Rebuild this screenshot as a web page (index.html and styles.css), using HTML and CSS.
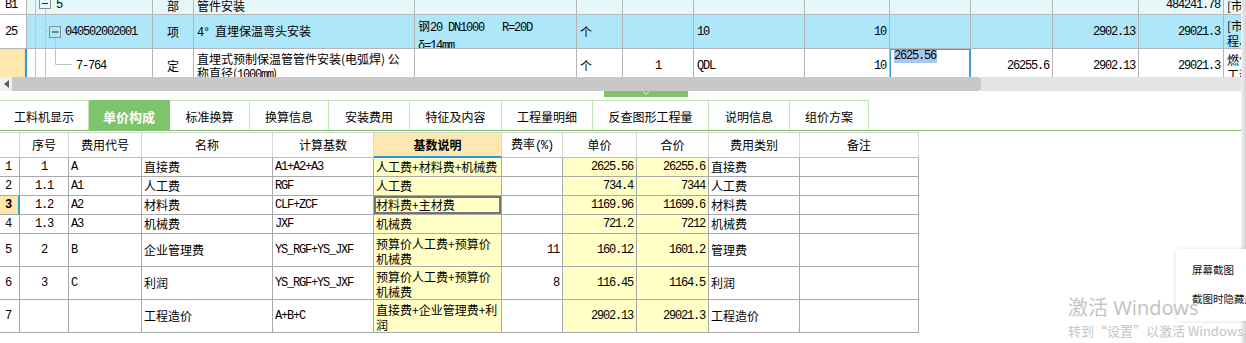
FILE: index.html
```html
<!DOCTYPE html>
<html lang="zh-CN">
<head>
<meta charset="utf-8">
<title>单价构成</title>
<link rel="stylesheet" href="styles.css">
</head>
<body>
<div class="app">
  <section class="grid-top">
    <div class="row r1">
      <div class="gc rn n">B1</div>
      <div class="gc code">
        <svg class="tree" width="29" height="14" viewBox="0 0 29 14">
          <path d="M8.5 0V14M18.5 9V14" stroke="#c4c4c4" fill="none"/>
          <rect x="12.5" y="-2.5" width="11" height="11" fill="none" stroke="#8c8c8c"/>
          <path d="M15 3.5H21" stroke="#222"/>
        </svg>
        <span class="n">5</span>
      </div>
      <div class="gc ctr">部</div>
      <div class="gc">管件安装</div>
      <div class="gc"></div><div class="gc"></div><div class="gc"></div><div class="gc"></div>
      <div class="gc"></div><div class="gc"></div><div class="gc"></div><div class="gc"></div>
      <div class="gc rt n">484241.78</div>
      <div class="gc">[市政</div>
    </div>
    <div class="row r2">
      <div class="gc rn n">25</div>
      <div class="gc code">
        <svg class="tree" width="38" height="33" viewBox="0 0 38 33">
          <path d="M8.5 0V33M18.5 0V33M18.5 16.5H22M28.5 23V33" stroke="#c4c4c4" fill="none"/>
          <rect x="22.5" y="11.5" width="11" height="11" fill="none" stroke="#8c8c8c"/>
          <path d="M25 17H31.5" stroke="#222"/>
        </svg>
        <span class="n">040502002001</span>
      </div>
      <div class="gc ctr">项</div>
      <div class="gc"><span><span class="n">4° </span>直埋保温弯头安装</span></div>
      <div class="gc top feat"><div>钢<span class="n">20 DN1000   R=20D</span><br><span class="n">δ=14mm</span></div></div>
      <div class="gc">个</div>
      <div class="gc"></div>
      <div class="gc n">10</div>
      <div class="gc rt n">10</div>
      <div class="gc"></div>
      <div class="gc"></div>
      <div class="gc rt n">2902.13</div>
      <div class="gc rt n">29021.3</div>
      <div class="gc top"><div>[市政<br>程、</div></div>
    </div>
    <div class="row r3">
      <div class="gc rn"></div>
      <div class="gc code">
        <svg class="tree" width="49" height="34" viewBox="0 0 49 34">
          <path d="M8.5 0V34M18.5 0V34M28.5 0V15.5H45" stroke="#c4c4c4" fill="none"/>
        </svg>
        <span class="n">7-764</span>
      </div>
      <div class="gc ctr">定</div>
      <div class="gc top wrap"><div>直埋式预制保温管管件安装(电弧焊) 公<br>称直径(<span class="n">1000mm</span>)</div></div>
      <div class="gc"></div>
      <div class="gc">个</div>
      <div class="gc ctr n">1</div>
      <div class="gc n">QDL</div>
      <div class="gc rt n">10</div>
      <div class="gc sel"><span class="n hi">2625.56</span></div>
      <div class="gc rt n">26255.6</div>
      <div class="gc rt n">2902.13</div>
      <div class="gc rt n">29021.3</div>
      <div class="gc top"><div>燃气<br>工程</div></div>
    </div>
  </section>

  <div class="hscroll">
    <div class="sb-arrow">
      <svg width="5" height="8" viewBox="0 0 5 8"><path d="M5 0V8L0 4Z" fill="#5a5a5a"/></svg>
    </div>
    <div class="sb-thumb"></div>
    <div class="sb-track"></div>
  </div>

  <div class="split">
    <div class="handle">
      <svg width="8" height="4" viewBox="0 0 8 4"><path d="M1 0.5L4 3.2L7 0.5" stroke="#e8f5e2" fill="none"/></svg>
    </div>
  </div>

  <nav class="tabs">
    <div class="tab">工料机显示</div>
    <div class="tab on">单价构成</div>
    <div class="tab">标准换算</div>
    <div class="tab">换算信息</div>
    <div class="tab">安装费用</div>
    <div class="tab">特征及内容</div>
    <div class="tab">工程量明细</div>
    <div class="tab">反查图形工程量</div>
    <div class="tab">说明信息</div>
    <div class="tab">组价方案</div>
  </nav>

  <section class="fee">
    <div class="row fh">
      <div class="fc"></div>
      <div class="fc">序号</div>
      <div class="fc">费用代号</div>
      <div class="fc">名称</div>
      <div class="fc">计算基数</div>
      <div class="fc hl">基数说明</div>
      <div class="fc"><span>费率<span class="n">(%)</span></span></div>
      <div class="fc">单价</div>
      <div class="fc">合价</div>
      <div class="fc">费用类别</div>
      <div class="fc">备注</div>
    </div>
    <div class="row fb">
      <div class="fc rn n">1</div>
      <div class="fc ctr n">1</div>
      <div class="fc n">A</div>
      <div class="fc">直接费</div>
      <div class="fc n">A1+A2+A3</div>
      <div class="fc y">人工费+材料费+机械费</div>
      <div class="fc"></div>
      <div class="fc y rt n">2625.56</div>
      <div class="fc y rt n">26255.6</div>
      <div class="fc">直接费</div>
      <div class="fc"></div>
    </div>
    <div class="row fb">
      <div class="fc rn n">2</div>
      <div class="fc ctr n">1.1</div>
      <div class="fc n">A1</div>
      <div class="fc">人工费</div>
      <div class="fc n">RGF</div>
      <div class="fc y">人工费</div>
      <div class="fc"></div>
      <div class="fc y rt n">734.4</div>
      <div class="fc y rt n">7344</div>
      <div class="fc">人工费</div>
      <div class="fc"></div>
    </div>
    <div class="row fb">
      <div class="fc rn cur">3</div>
      <div class="fc ctr n">1.2</div>
      <div class="fc n">A2</div>
      <div class="fc">材料费</div>
      <div class="fc n">CLF+ZCF</div>
      <div class="fc y focus">材料费+主材费</div>
      <div class="fc"></div>
      <div class="fc y rt n">1169.96</div>
      <div class="fc y rt n">11699.6</div>
      <div class="fc">材料费</div>
      <div class="fc"></div>
    </div>
    <div class="row fb">
      <div class="fc rn n">4</div>
      <div class="fc ctr n">1.3</div>
      <div class="fc n">A3</div>
      <div class="fc">机械费</div>
      <div class="fc n">JXF</div>
      <div class="fc y">机械费</div>
      <div class="fc"></div>
      <div class="fc y rt n">721.2</div>
      <div class="fc y rt n">7212</div>
      <div class="fc">机械费</div>
      <div class="fc"></div>
    </div>
    <div class="row fb">
      <div class="fc rn n">5</div>
      <div class="fc ctr n">2</div>
      <div class="fc n">B</div>
      <div class="fc">企业管理费</div>
      <div class="fc n">YS_RGF+YS_JXF</div>
      <div class="fc y top"><div>预算价人工费+预算价<br>机械费</div></div>
      <div class="fc rt n">11</div>
      <div class="fc y rt n">160.12</div>
      <div class="fc y rt n">1601.2</div>
      <div class="fc">管理费</div>
      <div class="fc"></div>
    </div>
    <div class="row fb">
      <div class="fc rn n">6</div>
      <div class="fc ctr n">3</div>
      <div class="fc n">C</div>
      <div class="fc">利润</div>
      <div class="fc n">YS_RGF+YS_JXF</div>
      <div class="fc y top"><div>预算价人工费+预算价<br>机械费</div></div>
      <div class="fc rt n">8</div>
      <div class="fc y rt n">116.45</div>
      <div class="fc y rt n">1164.5</div>
      <div class="fc">利润</div>
      <div class="fc"></div>
    </div>
    <div class="row fb">
      <div class="fc rn n">7</div>
      <div class="fc"></div>
      <div class="fc"></div>
      <div class="fc">工程造价</div>
      <div class="fc n">A+B+C</div>
      <div class="fc y top"><div>直接费+企业管理费+利<br>润</div></div>
      <div class="fc"></div>
      <div class="fc y rt n">2902.13</div>
      <div class="fc y rt n">29021.3</div>
      <div class="fc">工程造价</div>
      <div class="fc"></div>
    </div>
  </section>
</div>

<div class="edge"></div>
<div class="menu">
  <div class="mi">屏幕截图</div>
  <div class="mi">截图时隐藏此窗口</div>
</div>
<div class="wm">
  <div class="wm1">激活 Windows</div>
  <div class="wm2">转到<span class="q">“</span>设置<span class="q">”</span>以激活 Windows。</div>
</div>
</body>
</html>
```

FILE: styles.css
```css
* { box-sizing: border-box; margin: 0; padding: 0; }
html, body { width: 1246px; height: 343px; overflow: hidden; background: #fff; }
body {
  position: relative;
  font-family: "Noto Sans CJK SC", "Liberation Sans", sans-serif;
  font-size: 12px;
  color: #000;
}
.n {
  font-family: "Liberation Mono", "Noto Sans CJK SC", monospace;
  letter-spacing: -1.2px;
}

/* ---------- upper grid ---------- */
.grid-top {
  display: grid;
  grid-template-columns: 27px 126px 41px 221px 162px 46px 71px 111px 85px 81px 82px 86px 85px 60px;
  grid-template-rows: 15px 34px 35px;
  width: 1246px;
  height: 77px;
  overflow: hidden;
}
.row { display: contents; }
.gc {
  display: flex;
  align-items: center;
  padding: 0 3px;
  border-right: 1px solid #b6b6b6;
  border-bottom: 1px solid #b6b6b6;
  white-space: nowrap;
  overflow: hidden;
  line-height: 14px;
}
.r1 .gc { background: #e6f7fc; align-items: flex-start; line-height: 11px; }
.r2 .gc { background: #aee7f9; }
.r3 .gc { background: #fff; }
.gc.rn { background: #fff; padding-left: 5px; }
.r3 .gc.rn { background: #fde9b0; border-right: 2px solid #2c9fd8; }
.gc.code { padding-left: 0; }
.tree { flex: none; display: block; }
.ctr { justify-content: center; }
.rt { justify-content: flex-end; }
.gc.top { align-items: flex-start; padding-top: 3px; line-height: 15px; }
.gc.wrap { padding-top: 3px; line-height: 14px; }
.feat .n { white-space: pre; }
.gc.sel {
  align-items: flex-start;
  padding: 1px 0 0 4px;
  box-shadow: inset 0 0 0 1px #3aa2d8;
  border-color: #3aa2d8;
}
.hi { background: #a8c7ef; line-height: 13px; padding-right: 1px; }

/* ---------- scrollbar ---------- */
.hscroll { display: flex; height: 14px; }
.sb-arrow {
  width: 12px;
  background: #f0f0f0;
  display: flex;
  align-items: center;
  justify-content: center;
}
.sb-thumb { width: 969px; background: #c8c8c8; border-radius: 0 3px 3px 0; }
.sb-track { flex: 1; background: #e4e4e4; }

/* ---------- splitter ---------- */
.split { height: 9px; }
.handle {
  margin-left: 604px;
  width: 84px;
  height: 6px;
  background: #80c26c;
  display: flex;
  justify-content: center;
}

/* ---------- tabs ---------- */
.tabs {
  display: flex;
  height: 31px;
  border-bottom: 1px solid #7ec06b;
}
.tab {
  display: flex;
  align-items: center;
  justify-content: center;
  padding-top: 2px;
  border-top: 1px solid #c3e5b5;
  border-right: 1px solid #c3e5b5;
  white-space: nowrap;
}
.tab:nth-child(1) { width: 89px; }
.tab:nth-child(2) { width: 81px; }
.tab:nth-child(3) { width: 80px; }
.tab:nth-child(4) { width: 79px; }
.tab:nth-child(5) { width: 81px; }
.tab:nth-child(6) { width: 92px; }
.tab:nth-child(7) { width: 91px; }
.tab:nth-child(8) { width: 116px; }
.tab:nth-child(9) { width: 81px; }
.tab:nth-child(10) { width: 79px; }
.tab.on {
  background: #7ec46c;
  border-color: #7ec46c;
  color: #fff;
  font-weight: bold;
  font-size: 13px;
}

/* ---------- fee table ---------- */
.fee {
  display: grid;
  grid-template-columns: 20px 49px 73px 131px 101px 128px 61px 74px 72px 91px 119px;
  grid-template-rows: 25px 19px 19px 19px 19px 33px 33px 33px;
  width: 919px;
  margin-top: 1px;
  border-top: 1px solid #d6d6d6;
}
.fc {
  display: flex;
  align-items: center;
  padding: 0 2px;
  border-right: 1px solid #a9a9a9;
  border-bottom: 1px solid #a9a9a9;
  white-space: nowrap;
  overflow: hidden;
  line-height: 14px;
}
.fh .fc {
  justify-content: center;
  border-right-color: #d8d8d8;
  border-bottom-color: #bdbdbd;
}
.fh .fc.hl {
  background: #fde8b2;
  font-weight: bold;
  border-bottom: 2px solid #2b98d5;
}
.fc.rn { padding-left: 5px; }
.fc.cur {
  background: #fde7ae;
  font-weight: bold;
  border-right: 2px solid #2c9fd8;
  font-family: "Liberation Mono", monospace;
}
.fc.rt { padding-right: 3px; }
.fc.top { align-items: flex-start; padding-top: 2px; line-height: 15px; }
.y { background: #ffffc6; }
.fc.focus { box-shadow: inset 0 0 0 2px #747474; }

/* ---------- overlays ---------- */
.edge {
  position: absolute;
  top: 0;
  right: 0;
  width: 5px;
  height: 343px;
  background: linear-gradient(to right, #f3f3f3, #d2d2d2);
}
.menu {
  position: absolute;
  left: 1176px;
  top: 249px;
  width: 90px;
  height: 72px;
  background: #fff;
  border-radius: 5px;
  box-shadow: 0 0 4px rgba(0, 0, 0, 0.14);
  padding: 14px 0 0 16px;
  display: flex;
  flex-direction: column;
  gap: 16px;
  font-size: 10.5px;
  line-height: 13px;
  color: #111;
  white-space: nowrap;
  overflow: hidden;
}
.wm {
  position: absolute;
  left: 1068px;
  top: 296px;
  color: #c4c4c4;
  white-space: nowrap;
}
.wm1 {
  font-family: "Noto Sans", "Noto Sans CJK SC", sans-serif;
  font-size: 20px;
  line-height: 24px;
}
.wm2 {
  font-family: "Noto Sans CJK SC", "Noto Sans", sans-serif;
  font-size: 13px;
  line-height: 16px;
  margin-top: 3px;
}
.q { display: inline-block; width: 13px; text-align: center; }
```
